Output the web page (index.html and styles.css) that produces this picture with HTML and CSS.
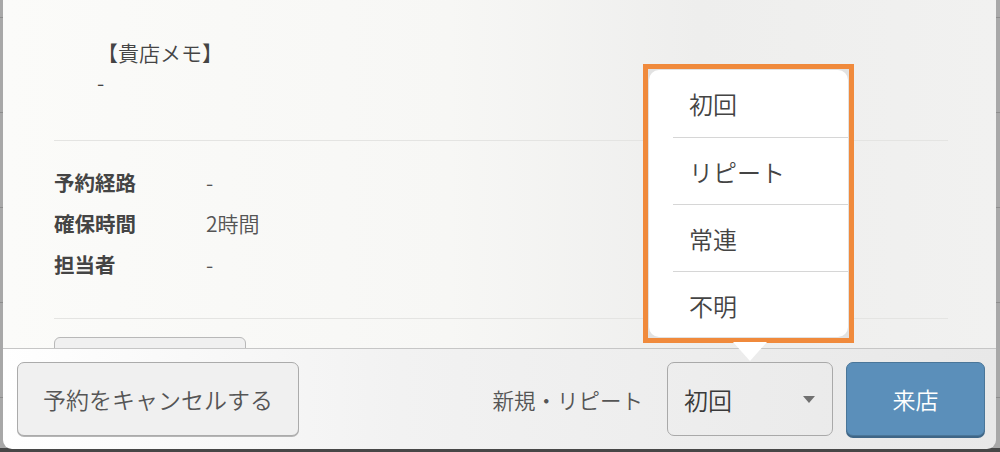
FILE: index.html
```html
<!DOCTYPE html>
<html lang="ja">
<head>
<meta charset="utf-8">
<title>予約詳細</title>
<link rel="stylesheet" href="styles.css">
</head>
<body>
<div class="screen">
  <div class="modal">
    <div class="content">
      <div class="memo">
        <p class="memo-title">【貴店メモ】</p>
        <p class="memo-body">-</p>
      </div>
      <hr class="rule rule-top">
      <dl class="info">
        <div class="row"><dt>予約経路</dt><dd>-</dd></div>
        <div class="row"><dt>確保時間</dt><dd>2時間</dd></div>
        <div class="row"><dt>担当者</dt><dd>-</dd></div>
      </dl>
      <hr class="rule rule-bottom">
      <div class="peek-btn"></div>
    </div>
    <div class="footer">
      <button class="btn btn-cancel" type="button">予約をキャンセルする</button>
      <div class="spacer"></div>
      <span class="footer-label">新規・リピート</span>
      <div class="select"><span class="select-value">初回</span><span class="caret"></span></div>
      <button class="btn btn-primary" type="button">来店</button>
    </div>
  </div>
  <div class="popover">
    <ul class="pop-list">
      <li class="pop-item">初回</li>
      <li class="pop-item">リピート</li>
      <li class="pop-item">常連</li>
      <li class="pop-item">不明</li>
    </ul>
  </div>
  <div class="pop-arrow"></div>
</div>
</body>
</html>
```

FILE: styles.css
```css
* { box-sizing: border-box; }
html, body { margin: 0; padding: 0; }
body {
  width: 1000px;
  height: 452px;
  overflow: hidden;
  font-family: "Noto Sans CJK JP", "Noto Sans", sans-serif;
  font-weight: 350;
  background:
    linear-gradient(to top, #474747 0 4px, transparent 4px),
    repeating-linear-gradient(to bottom, #a8a8a8 0 17px, #8d8d8d 17px 18px, #a8a8a8 18px 95px);
}
.screen {
  position: relative;
  width: 1000px;
  height: 452px;
}
.modal {
  margin-left: 3px;
  width: 993px;
  height: 449px;
  border-radius: 0 0 9px 9px;
  overflow: hidden;
  display: flex;
  flex-direction: column;
}
.content {
  height: 348px;
  flex: none;
  overflow: hidden;
  padding: 37px 48px 0 51px;
  background: linear-gradient(90deg, #fbfbf9 0%, #f7f7f5 45%, #eeeeed 70%, #f1f1f0 100%);
}
.memo { padding-left: 43px; color: #444; font-size: 21px; line-height: 30px; }
.memo p { margin: 0; }
.rule { border: 0; height: 1px; background: #e4e4e2; margin: 0; }
.rule-top { margin-top: 43px; }
.rule-bottom { margin-top: 33px; }
.info { margin: 21px 0 0; }
.row { display: flex; line-height: 41px; font-size: 20.5px; }
.row dt { width: 152px; font-weight: 700; color: #444; }
.row dd { margin: 0; color: #555; font-size: 21px; }
.peek-btn {
  margin-top: 18px;
  width: 192px;
  height: 40px;
  border: 1px solid #b8b8b8;
  border-radius: 6px;
  background: #f0f0f0;
}
.footer {
  flex: 1;
  border-top: 1px solid #c6c6c6;
  background: linear-gradient(90deg, #ffffff 0%, #f2f2f2 40%, #e8e8e8 100%);
  display: flex;
  align-items: center;
  padding: 0 11px 0 14px;
}
.spacer { flex: 1; }
.btn {
  font-family: inherit;
  font-weight: 350;
  height: 74px;
  border-radius: 7px;
  padding: 0;
  cursor: pointer;
}
.btn-cancel {
  width: 282px;
  font-size: 23px;
  color: #555;
  background: #f0f0f0;
  border: 1px solid #ababab;
  box-shadow: 0 1px 0 #b5b5b5;
}
.footer-label { font-size: 21.5px; color: #555; margin-right: 24px; }
.select {
  width: 166px;
  height: 74px;
  border: 1px solid #a9a9a9;
  border-radius: 7px;
  display: flex;
  align-items: center;
  padding: 0 17px 0 16px;
  margin-right: 13px;
}
.select-value { flex: 1; font-size: 24px; color: #3a3a3a; }
.caret {
  width: 0; height: 0;
  border-left: 6px solid transparent;
  border-right: 6px solid transparent;
  border-top: 7px solid #707070;
}
.btn-primary {
  width: 139px;
  font-size: 23px;
  color: #fff;
  background: #5b8fba;
  border: 1px solid #4a7699;
  box-shadow: 0 2px 0 #3f6687;
}
.popover {
  position: absolute;
  left: 643px;
  top: 64px;
  width: 211px;
  height: 279px;
  border: 5px solid #f08a3c;
  background: #e2e2e2;
  padding: 1px;
}
.pop-list {
  list-style: none;
  margin: 0;
  padding: 0;
  height: 100%;
  background: #fff;
  border-radius: 10px;
}
.pop-item {
  height: 67px;
  margin-left: 24px;
  padding-left: 16px;
  display: flex;
  align-items: center;
  font-size: 24px;
  color: #444;
}
.pop-item + .pop-item { border-top: 1px solid #d6d6d6; }
.pop-arrow {
  position: absolute;
  left: 733px;
  top: 342px;
  width: 0; height: 0;
  border-left: 17px solid transparent;
  border-right: 17px solid transparent;
  border-top: 19px solid #fff;
}
```
